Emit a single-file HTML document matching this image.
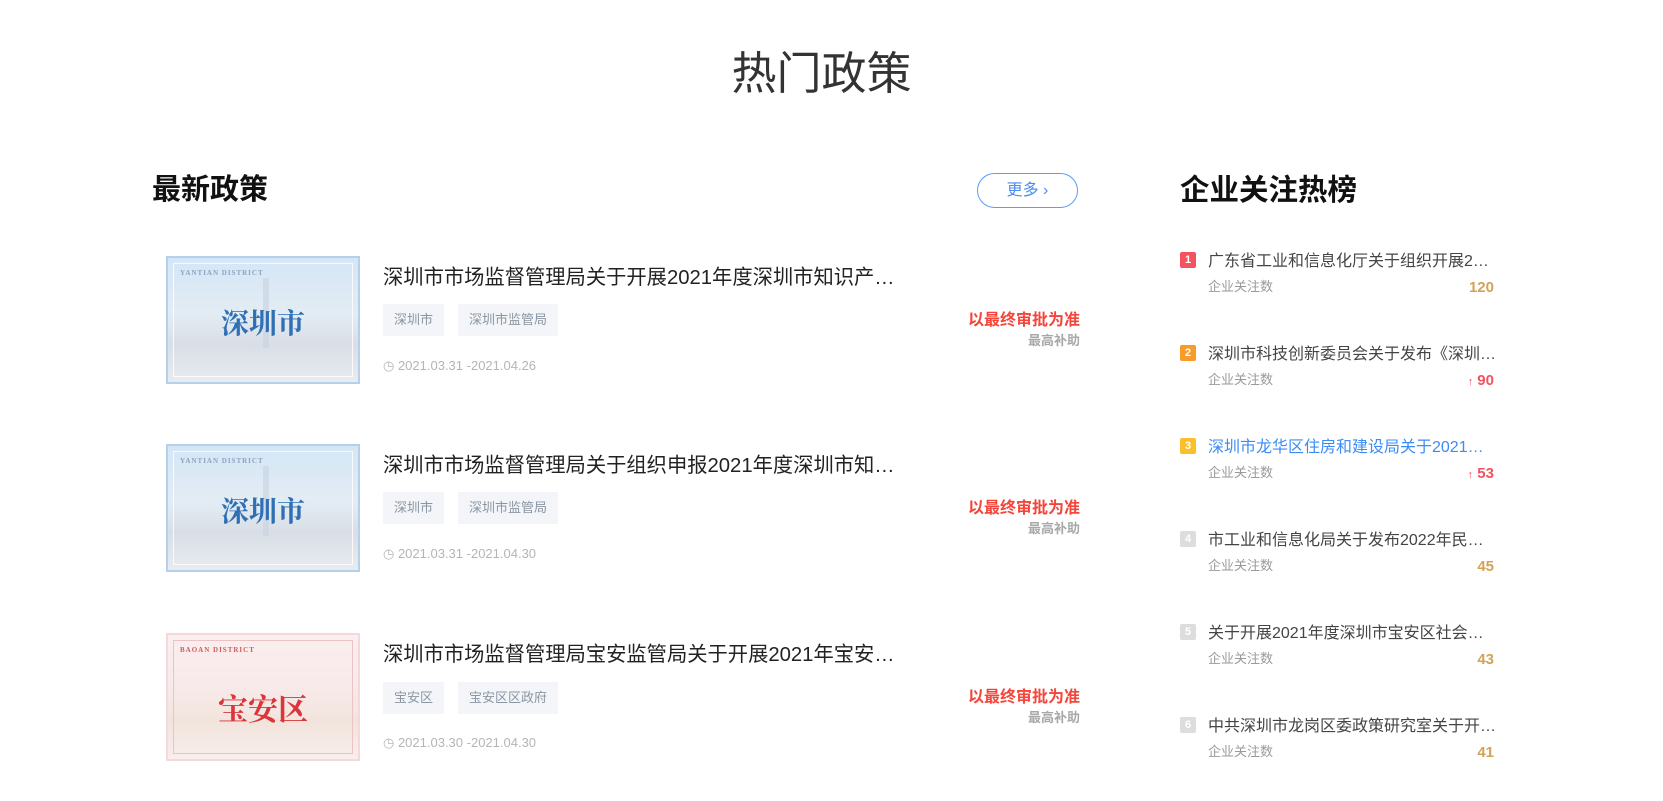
<!DOCTYPE html>
<html><head><meta charset="utf-8"><style>
*{margin:0;padding:0;box-sizing:border-box}
body{width:1663px;height:801px;background:#fff;position:relative;overflow:hidden;font-family:"Liberation Sans","Noto Sans CJK SC",sans-serif;color:#333}
.a{position:absolute;white-space:nowrap}
.h1{left:-10px;width:1663px;text-align:center;top:37px;font-size:45px;color:#333}
.sec{font-size:29px;font-weight:bold;color:#111}
.more{left:977px;top:173px;width:101px;height:35px;border:1px solid #5b9cf5;border-radius:18px;color:#4a8cf2;font-size:16px;line-height:33px;text-align:center}
.th{width:194px;height:128px;overflow:hidden}
.th.b{background:linear-gradient(180deg,#d4e6f6 0%,#e3ecf4 45%,#d9dee6 70%,#e8ecf0 100%);border:2px solid #b4d0ea}
.th.r{background:linear-gradient(180deg,#fbeeee 0%,#f8eaea 40%,#f2e4dc 70%,#f9eeee 100%);border:2px solid #f3d9db}
.th .in{position:absolute;left:5px;top:5px;right:5px;bottom:5px;border:1px solid rgba(255,255,255,.8)}
.th.r .in{border-color:#eec2c4}
.th .en{position:absolute;left:12px;top:11px;font-family:"Liberation Serif",serif;font-size:7px;font-weight:bold;letter-spacing:1px;color:#8aa3c0}
.th.r .en{color:#d25a5a}
.th .cn{position:absolute;left:0;right:0;top:44px;text-align:center;font-family:"Liberation Serif","Noto Serif CJK SC",serif;font-size:28px;font-weight:bold;color:#2f6fb4}
.th.r .cn{color:#d9353b;top:50px;font-size:30px}
.tw{position:absolute;left:95px;top:20px;width:6px;height:70px;background:rgba(200,210,225,.6)}
.t{font-size:20.3px;color:#222}
.tag{height:32px;line-height:32px;background:#f3f5f8;color:#8a96a3;font-size:13px;padding:0 11px}
.dt{font-size:13px;color:#b5b5b5}
.red{font-size:16px;font-weight:bold;color:#f5453a;right:583px;text-align:right}
.gr{font-size:13px;color:#a8a8a8;right:583px;text-align:right;font-weight:bold}
.bd{width:16px;height:16px;color:#fff;font-size:11px;font-weight:bold;text-align:center;line-height:16px;border-radius:2px}
.rt{font-size:16px;color:#444}
.rs{font-size:13px;color:#9a9a9a}
.n{font-size:15px;font-weight:bold;text-align:right}
.clip{position:absolute;left:1170px;top:230px;width:340px;height:528px;overflow:hidden}
</style></head><body>
<div class="a h1">热门政策</div>
<div class="a sec" style="left:152px;top:166px">最新政策</div>
<div class="a more">更多 ›</div>
<div class="a sec" style="left:1180px;top:167px;font-size:29.5px">企业关注热榜</div>

<div class="a th b" style="left:166px;top:256px"><div class="tw"></div><div class="in"></div><div class="en">YANTIAN DISTRICT</div><div class="cn">深圳市</div></div>
<div class="a t" style="left:383px;top:260px">深圳市市场监督管理局关于开展2021年度深圳市知识产…</div>
<div class="a tag" style="left:383px;top:304px">深圳市</div>
<div class="a tag" style="left:458px;top:304px">深圳市监管局</div>
<div class="a dt" style="left:383px;top:358px">◷ 2021.03.31 -2021.04.26</div>
<div class="a red" style="top:306px">以最终审批为准</div>
<div class="a gr" style="top:330px">最高补助</div>

<div class="a th b" style="left:166px;top:444px"><div class="tw"></div><div class="in"></div><div class="en">YANTIAN DISTRICT</div><div class="cn">深圳市</div></div>
<div class="a t" style="left:383px;top:448px">深圳市市场监督管理局关于组织申报2021年度深圳市知…</div>
<div class="a tag" style="left:383px;top:492px">深圳市</div>
<div class="a tag" style="left:458px;top:492px">深圳市监管局</div>
<div class="a dt" style="left:383px;top:546px">◷ 2021.03.31 -2021.04.30</div>
<div class="a red" style="top:494px">以最终审批为准</div>
<div class="a gr" style="top:518px">最高补助</div>

<div class="a th r" style="left:166px;top:633px"><div class="in"></div><div class="en">BAOAN DISTRICT</div><div class="cn">宝安区</div></div>
<div class="a t" style="left:383px;top:637px">深圳市市场监督管理局宝安监管局关于开展2021年宝安…</div>
<div class="a tag" style="left:383px;top:682px">宝安区</div>
<div class="a tag" style="left:458px;top:682px">宝安区区政府</div>
<div class="a dt" style="left:383px;top:735px">◷ 2021.03.30 -2021.04.30</div>
<div class="a red" style="top:683px">以最终审批为准</div>
<div class="a gr" style="top:707px">最高补助</div>

<div class="clip">
<div class="a bd" style="left:10px;top:22px;background:#f5515f">1</div>
<div class="a rt" style="left:38px;top:17px">广东省工业和信息化厅关于组织开展2…</div>
<div class="a rs" style="left:38px;top:46px">企业关注数</div>
<div class="a n" style="right:16px;top:49px;color:#d4a257">120</div>

<div class="a bd" style="left:10px;top:115px;background:#fa9a2b">2</div>
<div class="a rt" style="left:38px;top:110px">深圳市科技创新委员会关于发布《深圳…</div>
<div class="a rs" style="left:38px;top:139px">企业关注数</div>
<div class="a n" style="right:16px;top:142px;color:#f5515f"><span style="font-size:11px">↑</span> 90</div>

<div class="a bd" style="left:10px;top:208px;background:#fbbf2b">3</div>
<div class="a rt" style="left:38px;top:203px;color:#3c8cf5">深圳市龙华区住房和建设局关于2021…</div>
<div class="a rs" style="left:38px;top:232px">企业关注数</div>
<div class="a n" style="right:16px;top:235px;color:#f5515f"><span style="font-size:11px">↑</span> 53</div>

<div class="a bd" style="left:10px;top:301px;background:#ddd">4</div>
<div class="a rt" style="left:38px;top:296px">市工业和信息化局关于发布2022年民…</div>
<div class="a rs" style="left:38px;top:325px">企业关注数</div>
<div class="a n" style="right:16px;top:328px;color:#d4a257">45</div>

<div class="a bd" style="left:10px;top:394px;background:#ddd">5</div>
<div class="a rt" style="left:38px;top:389px">关于开展2021年度深圳市宝安区社会…</div>
<div class="a rs" style="left:38px;top:418px">企业关注数</div>
<div class="a n" style="right:16px;top:421px;color:#d4a257">43</div>

<div class="a bd" style="left:10px;top:487px;background:#ddd">6</div>
<div class="a rt" style="left:38px;top:482px">中共深圳市龙岗区委政策研究室关于开…</div>
<div class="a rs" style="left:38px;top:511px">企业关注数</div>
<div class="a n" style="right:16px;top:514px;color:#d4a257">41</div>
</div>
</body></html>
